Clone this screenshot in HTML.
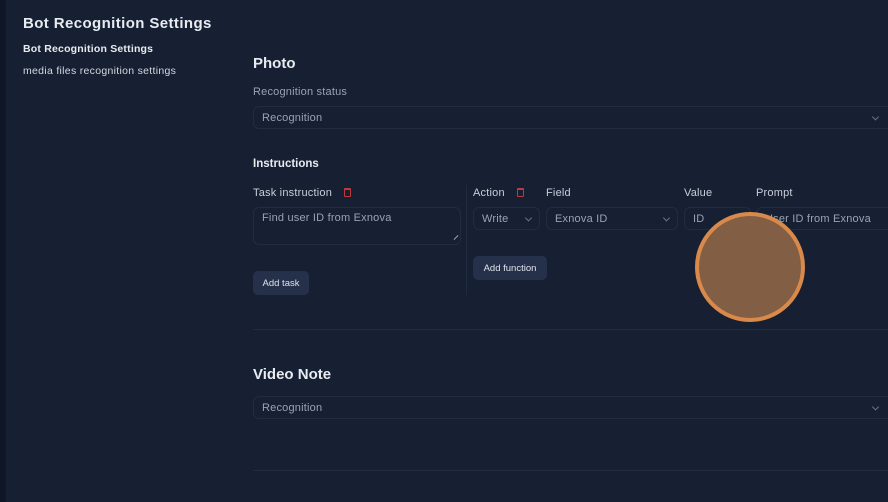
<!DOCTYPE html>
<html><head><meta charset="utf-8"><style>
*{box-sizing:border-box;margin:0;padding:0}
body{width:888px;height:502px;overflow:hidden;background:#172033;font-family:"Liberation Sans",sans-serif;color:#e8ebf0;position:relative}
.a{position:absolute;white-space:nowrap}
.strip{left:0;top:0;width:6px;height:502px;background:#0f1626}
.inp{position:absolute;border:1px solid #222c3f;border-radius:6px;background:#172033;color:#9aa3b2;font-size:11px;letter-spacing:0.2px;padding-left:8px;display:flex;align-items:center}
.lbl{font-size:11px;color:#c9ced8;letter-spacing:0.2px}
.btn{position:absolute;background:#25304a;border-radius:5px;color:#e0e4ea;font-size:9.5px;display:flex;align-items:center;justify-content:center}
.chev{position:absolute;right:8px;top:50%;width:5px;height:5px;border-right:1px solid #6b7486;border-bottom:1px solid #6b7486;transform:translateY(-70%) rotate(45deg)}
.trash{position:absolute;width:7px;height:9px;border:1.3px solid #c0393b;border-top-width:2px;border-radius:1px}
.hr{position:absolute;left:253px;right:0;height:1px;background:#222c3f}
</style></head><body>
<div class="a strip"></div>
<div class="a" style="left:23px;top:15px;font-size:15px;font-weight:bold;letter-spacing:0.4px">Bot Recognition Settings</div>
<div class="a" style="left:23px;top:43px;font-size:10.5px;font-weight:bold;letter-spacing:0.2px">Bot Recognition Settings</div>
<div class="a" style="left:23px;top:65px;font-size:10.5px;color:#d4d8df;letter-spacing:0.3px">media files recognition settings</div>

<div class="a" style="left:253px;top:55px;font-size:15px;font-weight:bold">Photo</div>
<div class="a lbl" style="left:253px;top:86px;color:#9aa3b2">Recognition status</div>
<div class="inp" style="left:253px;top:106px;width:640px;height:23px">Recognition<span class="chev" style="right:14px"></span></div>
<div class="a" style="left:253px;top:158px;font-size:11.5px;font-weight:bold">Instructions</div>

<div class="a lbl" style="left:253px;top:187px">Task instruction</div>
<div class="trash" style="left:344px;top:188px"></div>
<div class="inp" style="left:253px;top:207px;width:208px;height:38px;align-items:flex-start;padding-top:4px">Find user ID from Exnova</div>
<div class="a" style="left:453px;top:237px;width:6px;height:1px;background:#9aa3b2;transform:rotate(-45deg)"></div>
<div class="btn" style="left:253px;top:271px;width:56px;height:24px">Add task</div>
<div class="a" style="left:466px;top:185px;width:1px;height:110px;background:#222c3f"></div>

<div class="a lbl" style="left:473px;top:187px">Action</div>
<div class="trash" style="left:517px;top:188px"></div>
<div class="a lbl" style="left:546px;top:187px">Field</div>
<div class="a lbl" style="left:684px;top:187px">Value</div>
<div class="a lbl" style="left:756px;top:187px">Prompt</div>
<div class="inp" style="left:473px;top:207px;width:67px;height:23px">Write<span class="chev"></span></div>
<div class="inp" style="left:546px;top:207px;width:132px;height:23px">Exnova ID<span class="chev"></span></div>
<div class="inp" style="left:684px;top:207px;width:67px;height:23px">ID</div>
<div class="inp" style="left:756px;top:207px;width:140px;height:23px">User ID from Exnova</div>
<div class="btn" style="left:473px;top:256px;width:74px;height:24px">Add function</div>

<div class="a" style="left:695px;top:212px;width:110px;height:110px;border-radius:50%;background:#825e45;border:4px solid #d98a4a"></div>

<div class="hr" style="top:329px"></div>
<div class="a" style="left:253px;top:366px;font-size:15px;font-weight:bold">Video Note</div>
<div class="inp" style="left:253px;top:396px;width:640px;height:23px">Recognition<span class="chev" style="right:14px"></span></div>
<div class="hr" style="top:470px"></div>
</body></html>
